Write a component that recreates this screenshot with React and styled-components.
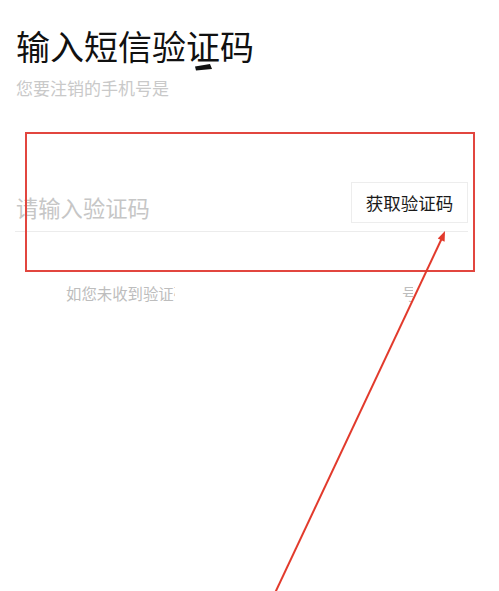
import React from "react";
import styled, { createGlobalStyle } from "styled-components";

const Global = createGlobalStyle`
  html, body { margin: 0; padding: 0; background: #ffffff; }
  body { font-family: "Noto Sans CJK SC", "Noto Sans", sans-serif; }
  * { box-sizing: border-box; }
`;

const Page = styled.div`
  position: relative;
  width: 499px;
  height: 591px;
  overflow: hidden;
  padding: 26px 31px 0 15px;
  background: #fff;
`;

const Title = styled.h1`
  margin: 0;
  padding-left: 1px;
  font-size: 34px;
  line-height: 40px;
  font-weight: 400;
  color: #111;
`;

const Subtitle = styled.p`
  margin: 10px 0 0;
  padding-left: 1px;
  font-size: 17px;
  line-height: 24px;
  color: #c9c9c9;
`;

const InputRow = styled.div`
  margin-top: 82px;
  height: 50px;
  display: flex;
  align-items: center;
  border-bottom: 1px solid #ececec;
`;

const CodeInput = styled.input`
  flex: 1;
  min-width: 0;
  border: none;
  outline: none;
  background: transparent;
  padding: 0 0 0 1px;
  font-family: inherit;
  font-size: 22.3px;
  line-height: 30px;
  height: 30px;
  color: #333;
  &::placeholder { color: #c6c6c6; }
`;

const CodeButton = styled.button`
  flex: none;
  width: 117px;
  height: 41px;
  margin-bottom: 8px;
  border: 1px solid #ededed;
  background: #fff;
  font-family: inherit;
  font-size: 17.5px;
  color: #1a1a1a;
  padding: 0;
  cursor: pointer;
`;

const Hint = styled.div`
  margin-top: 50px;
  display: flex;
  padding-left: 51px;
  font-size: 15.4px;
  line-height: 22px;
  color: #bdbdbd;
`;

const Clip = styled.span`
  display: block;
  overflow: hidden;
  white-space: nowrap;
  width: ${(p) => p.$w}px;
  margin-left: ${(p) => p.$ml || 0}px;
`;

const Highlight = styled.div`
  position: absolute;
  left: 25px;
  top: 132px;
  width: 450px;
  height: 140px;
  border: 2px solid #e2463f;
  pointer-events: none;
`;

const Overlay = styled.svg`
  position: absolute;
  left: 0;
  top: 0;
  pointer-events: none;
`;

export default function App() {
  return (
    <>
      <Global />
      <Page>
        <Title>输入短信验证码</Title>
        <Subtitle>您要注销的手机号是</Subtitle>
        <InputRow>
          <CodeInput placeholder="请输入验证码" />
          <CodeButton>获取验证码</CodeButton>
        </InputRow>
        <Hint>
          <Clip $w={109}>如您未收到验证码，请</Clip>
          <Clip $w={11} $ml={227}>号</Clip>
        </Hint>
        <Highlight />
        <Overlay width="499" height="591" viewBox="0 0 499 591">
          <polygon points="195,66.5 210,64 212,69 196,70.5" fill="#111" />
          <line x1="275" y1="593" x2="442" y2="238" stroke="#e23a2c" strokeWidth="2" />
          <polygon points="445,231 444.6,241.8 437.8,238.6" fill="#e23a2c" />
        </Overlay>
      </Page>
    </>
  );
}
